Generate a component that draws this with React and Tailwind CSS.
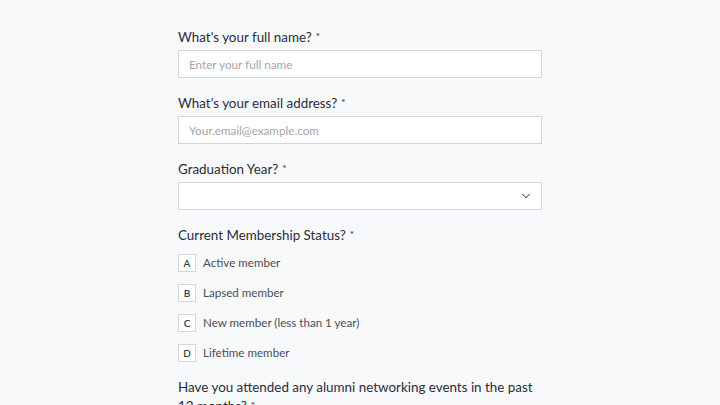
import { ChevronDown } from 'lucide-react';

const options = [
  { key: 'A', label: 'Active member' },
  { key: 'B', label: 'Lapsed member' },
  { key: 'C', label: 'New member (less than 1 year)' },
  { key: 'D', label: 'Lifetime member' },
];

function Label({ children }) {
  return (
    <div className="h-5 leading-5 text-[13.4px] text-[#2b2d3a] mb-[3px]">
      {children}
      <sup className="ml-[4px] text-[10px] relative -top-[2px]">*</sup>
    </div>
  );
}

function TextField({ label, placeholder }) {
  return (
    <div className="mb-[15px]">
      <Label>{label}</Label>
      <input
        placeholder={placeholder}
        className="block w-full h-7 border border-[#d4d6db] bg-white px-[10px] text-[11.7px] text-[#2b2d3a] placeholder:text-[#a3a6ad] outline-none"
      />
    </div>
  );
}

export default function App() {
  return (
    <div className="h-[405px] overflow-hidden bg-[#f8f9fb] pt-[27px] font-['Lato','Liberation_Sans',sans-serif]">
      <div className="w-[364px] ml-[178px]">
        <TextField label="What's your full name?" placeholder="Enter your full name" />
        <TextField label="What's your email address?" placeholder="Your.email@example.com" />

        <div className="mb-[15px]">
          <Label>Graduation Year?</Label>
          <div className="h-7 border border-[#d4d6db] bg-white flex items-center justify-end pr-[8px]">
            <ChevronDown size={14} strokeWidth={1.8} className="text-[#4a4d57]" />
          </div>
        </div>

        <div className="mb-4">
          <div className="mb-[9px]">
            <Label>Current Membership Status?</Label>
          </div>
          <div className="flex flex-col gap-3">
            {options.map(o => (
              <div key={o.key} className="flex items-center h-[18px]">
                <span className="w-[18px] h-[18px] border border-[#d4d6db] bg-white flex items-center justify-center text-[10px] font-semibold text-[#3a3c46]">
                  {o.key}
                </span>
                <span className="ml-[7px] text-[11.6px] text-[#4a4d57]">{o.label}</span>
              </div>
            ))}
          </div>
        </div>

        <div className="text-[13.4px] leading-[19px] text-[#2b2d3a]">
          Have you attended any alumni networking events in the past<br />12 months?
          <sup className="ml-[4px] text-[10px] relative -top-[2px]">*</sup>
        </div>
      </div>
    </div>
  );
}
